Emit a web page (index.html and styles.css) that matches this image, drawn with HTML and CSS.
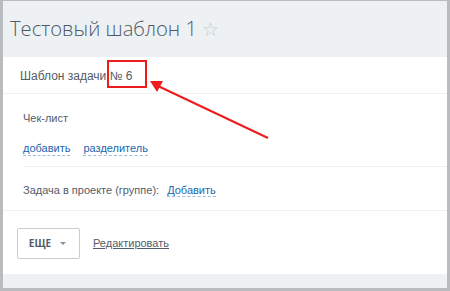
FILE: index.html
```html
<!DOCTYPE html>
<html lang="ru">
<head>
  <meta charset="UTF-8">
  <title>Тестовый шаблон 1</title>
  <link rel="stylesheet" href="styles.css">
</head>
<body>
  <div class="frame">
    <h1 class="page-title">Тестовый шаблон 1 <span class="star">☆</span></h1>
    <div class="card">
      <div class="card-head">Шаблон задачи № 6</div>
      <div class="card-body">
        <div class="checklist">
          <div class="label">Чек-лист</div>
          <div class="links">
            <a class="dash-link">добавить</a>
            <a class="dash-link">разделитель</a>
          </div>
        </div>
        <div class="project">
          Задача в проекте (группе): <a class="dash-link">Добавить</a>
        </div>
      </div>
      <div class="card-foot">
        <button class="more-btn">ЕЩЕ <span class="caret"></span></button>
        <a class="edit-link">Редактировать</a>
      </div>
    </div>
    <div class="bottom-band"></div>

    <!-- annotation over the screenshot -->
    <svg class="note" width="450" height="291" viewBox="0 0 450 291">
      <rect x="108" y="61" width="38" height="26" fill="none" stroke="#ee1c1c" stroke-width="2"/>
      <line x1="268" y1="138" x2="158" y2="86" stroke="#ee1c1c" stroke-width="2"/>
      <polygon points="150,81 163,81 157,92" fill="#ee1c1c"/>
    </svg>
  </div>
</body>
</html>
```

FILE: styles.css
```css
* {
  box-sizing: border-box;
}

body {
  margin: 0;
  width: 450px;
  height: 291px;
  font-family: 'Liberation Sans', Arial, sans-serif;
  color: #535c69;
  overflow: hidden;
}

.frame {
  position: relative;
  width: 450px;
  height: 291px;
  border-style: solid;
  border-color: #b9bcbf;
  border-width: 1px 3px 3px 3px;
  background: #edf1f4;
  display: flex;
  flex-direction: column;
}

.page-title {
  margin: 0;
  height: 56px;
  padding: 13px 0 0 7px;
  font-family: 'Open Sans', sans-serif;
  font-weight: 300;
  font-size: 20.2px;
  line-height: 28px;
  color: #4f5965;
  white-space: nowrap;
}

.star {
  color: #c3c8cd;
  font-size: 19px;
}

.card {
  background: #fff;
  height: 217px;
  display: flex;
  flex-direction: column;
}

.card-head {
  height: 37px;
  padding: 12px 0 0 17px;
  font-size: 12px;
  line-height: 14px;
  border-bottom: 1px solid #eef0f2;
}

.card-body {
  padding: 0 0 0 20px;
  font-size: 11px;
  height: 117px;
  border-bottom: 1px solid #eef0f2;
}

.checklist {
  padding: 17px 0 0;
  height: 73px;
  border-bottom: 1px solid #eef0f2;
}

.label {
  line-height: 14px;
}

.links {
  margin-top: 17px;
  display: flex;
  gap: 13px;
}

.dash-link {
  color: #2067b0;
  border-bottom: 1px dashed #9fbbd9;
  line-height: 13px;
}

.project {
  padding-top: 16px;
  line-height: 14px;
}

.project .dash-link {
  margin-left: 5px;
}

.card-foot {
  flex: 1;
  display: flex;
  align-items: center;
  padding: 0 0 0 14px;
  gap: 13px;
}

.more-btn {
  width: 63px;
  height: 31px;
  margin-top: 1px;
  background: #fff;
  border: 1px solid #c6cdd3;
  border-radius: 2px;
  font-family: 'Open Sans', sans-serif;
  font-weight: 700;
  font-size: 10px;
  color: #535c69;
  display: flex;
  align-items: center;
  justify-content: center;
  gap: 9px;
  padding: 0 2px 0 0;
}

.caret {
  width: 0;
  height: 0;
  border-left: 3px solid transparent;
  border-right: 3px solid transparent;
  border-top: 3px solid #8a9097;
}

.edit-link {
  font-size: 11px;
  color: #535c69;
  text-decoration: underline;
}

.bottom-band {
  flex: 1;
}

.note {
  position: absolute;
  top: -1px;
  left: -3px;
  pointer-events: none;
}
```
